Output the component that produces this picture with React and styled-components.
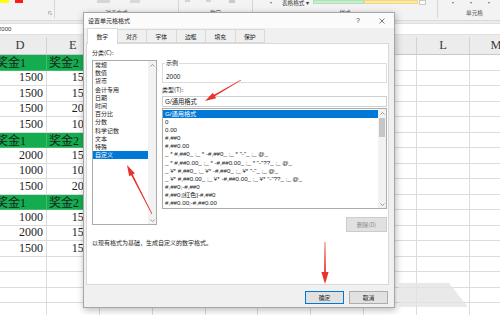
import React from 'react';
import styled, { createGlobalStyle } from 'styled-components';

const UI = `"Noto Sans CJK SC", "Liberation Sans", sans-serif`;
const LATIN_UI = `"Liberation Sans", "Noto Sans CJK SC", sans-serif`;
const CELL = `"Liberation Serif", "Noto Sans CJK SC", serif`;

const Global = createGlobalStyle`
  html, body { margin: 0; padding: 0; }
  body { background: #fff; font-family: ${UI}; }
  #root { width: 500px; height: 315px; overflow: hidden; }
`;

const Page = styled.div`
  position: relative;
  width: 500px;
  height: 315px;
  overflow: hidden;
  background: #fff;
`;

/* ---------- Ribbon ---------- */
const Ribbon = styled.div`
  display: flex;
  align-items: flex-start;
  height: 21px;
  box-sizing: border-box;
  background: #f3f3f3;
  border-bottom: 1px solid #d9d9d9;
  overflow: hidden;
`;
const Group = styled.div`
  flex: none;
  width: ${(p) => p.$w}px;
  height: 18px;
  box-sizing: border-box;
  border-right: 1px solid #d6d6d6;
  display: flex;
  flex-direction: column;
`;
const GroupTop = styled.div`
  height: 7px;
  display: flex;
  align-items: flex-start;
`;
const GroupLabel = styled.div`
  flex: 1;
  display: flex;
  align-items: center;
  justify-content: ${(p) => p.$justify || 'center'};
  padding-right: ${(p) => p.$pr || 0}px;
  font-family: ${UI};
  font-size: 5.6px;
  color: #505050;
`;
const Swatch = styled.div`
  flex: none;
  margin-left: ${(p) => p.$ml || 0}px;
  width: ${(p) => p.$w}px;
  height: ${(p) => p.$h || 3}px;
  background: ${(p) => p.$c};
  border: ${(p) => (p.$b ? `1px solid ${p.$b}` : 'none')};
  box-sizing: border-box;
`;
const RibbonText = styled.div`
  flex: none;
  margin-left: ${(p) => p.$ml || 0}px;
  font-family: ${UI};
  font-size: 5.6px;
  line-height: 6px;
  color: #333;
  white-space: nowrap;
`;
const Caret = styled.div`
  flex: none;
  margin-left: ${(p) => p.$ml || 0}px;
  margin-top: 2px;
  width: 0;
  height: 0;
  border-left: 1.5px solid transparent;
  border-right: 1.5px solid transparent;
  border-top: 2px solid #777;
`;

/* ---------- Formula bar ---------- */
const FormulaRow = styled.div`
  height: 16px;
  box-sizing: border-box;
  padding-top: 2px;
  background: #ececec;
`;
const FormulaInput = styled.div`
  height: 12px;
  box-sizing: border-box;
  background: #fff;
  border-top: 1px solid #e0e0e0;
  border-bottom: 1px solid #e0e0e0;
  font-family: ${LATIN_UI};
  font-size: 6px;
  line-height: 10px;
  color: #333;
  text-indent: -2px;
`;

/* ---------- Sheet ---------- */
const Sheet = styled.div`
  display: grid;
  grid-template-columns: repeat(10, 52.9px);
  grid-template-rows: 18px;
  grid-auto-rows: 15.5px;
  margin-left: -6px;
  width: 529px;
`;
const HeadCell = styled.div`
  box-sizing: border-box;
  background: #ececec;
  border-right: 1px solid #d2d2d2;
  border-bottom: 1px solid #c8c8c8;
  display: flex;
  align-items: center;
  justify-content: center;
  font-family: ${CELL};
  font-size: 12.5px;
  color: #3a3a3a;
`;
const Cell = styled.div`
  box-sizing: border-box;
  background: ${(p) => (p.$green ? '#13ad4f' : '#fff')};
  border-right: 1px solid ${(p) => (p.$green ? '#3fbc6c' : '#dcdcdc')};
  border-bottom: 1px solid ${(p) => (p.$green ? '#3fbc6c' : '#dcdcdc')};
  display: flex;
  align-items: center;
  justify-content: ${(p) => (p.$num ? 'flex-end' : 'flex-start')};
  padding: 0 3px 0 2px;
  overflow: hidden;
  white-space: nowrap;
  font-family: ${CELL};
  font-size: 12px;
  color: #1c1c1c;
`;

/* ---------- Dialog ---------- */
const Dialog = styled.div`
  position: absolute;
  left: 83px;
  top: 12px;
  width: 312px;
  height: 296px;
  box-sizing: border-box;
  background: #f0f0f0;
  border: 1px solid #a6a6a6;
  box-shadow: 1px 2px 7px rgba(0, 0, 0, 0.28);
  display: flex;
  flex-direction: column;
  font-family: ${UI};
  color: #1f1f1f;
`;
const TitleBar = styled.div`
  flex: none;
  height: 15px;
  display: flex;
  align-items: center;
  background: #fbfbfb;
`;
const Title = styled.div`
  flex: 1;
  padding-left: 4px;
  font-size: 6px;
  color: #222;
`;
const TitleBtn = styled.div`
  flex: none;
  width: 24px;
  height: 15px;
  display: flex;
  align-items: center;
  justify-content: center;
  font-family: ${LATIN_UI};
  font-size: 7px;
  color: #444;
`;
const Body = styled.div`
  flex: 1;
  display: flex;
  flex-direction: column;
  padding: 0 5px 0 2px;
  min-height: 0;
`;
const TabStrip = styled.div`
  flex: none;
  height: 15px;
  display: flex;
  align-items: flex-end;
  padding-left: 1px;
`;
const Tab = styled.div`
  flex: none;
  width: 30.5px;
  height: ${(p) => (p.$active ? 16 : 14)}px;
  margin-right: -1px;
  margin-bottom: ${(p) => (p.$active ? -1 : 0)}px;
  box-sizing: border-box;
  border: 1px solid #d9d9d9;
  border-bottom: ${(p) => (p.$active ? 'none' : '1px solid #d9d9d9')};
  background: ${(p) => (p.$active ? '#fff' : '#f0f0f0')};
  position: relative;
  z-index: ${(p) => (p.$active ? 1 : 0)};
  display: flex;
  align-items: center;
  justify-content: center;
  font-size: 5.8px;
  color: #222;
`;
const Panel = styled.div`
  flex: 1;
  background: #fff;
  border: 1px solid #d9d9d9;
  display: flex;
  flex-direction: column;
  padding: 0 1px 0 5px;
`;
const Columns = styled.div`
  display: flex;
  gap: 5px;
  align-items: flex-start;
`;
const Col = styled.div`
  flex: none;
  width: ${(p) => p.$w}px;
  display: flex;
  flex-direction: column;
`;
const Label = styled.div`
  margin-top: ${(p) => p.$mt || 0}px;
  height: 8px;
  line-height: 8px;
  font-size: 6px;
  color: #222;
  white-space: nowrap;
`;
const ListBox = styled.div`
  margin-top: ${(p) => p.$mt || 0}px;
  height: ${(p) => p.$h}px;
  box-sizing: border-box;
  border: 1px solid #ababab;
  display: flex;
  background: #fff;
`;
const ListItems = styled.div`
  flex: 1;
  min-width: 0;
  padding-top: ${(p) => p.$pt || 0}px;
  overflow: hidden;
`;
const ListItem = styled.div`
  height: ${(p) => p.$h}px;
  line-height: ${(p) => p.$h}px;
  padding-left: 2px;
  font-family: ${(p) => (p.$latin ? LATIN_UI : UI)};
  font-size: ${(p) => p.$fs}px;
  white-space: pre;
  background: ${(p) => (p.$sel ? '#0078d7' : 'transparent')};
  color: ${(p) => (p.$sel ? '#fff' : '#222')};
`;
const ScrollBar = styled.div`
  flex: none;
  width: 8px;
  background: #f2f2f2;
  display: flex;
  flex-direction: column;
  align-items: center;
`;
const ScrollArrow = styled.div`
  flex: none;
  height: 8px;
  width: 8px;
  display: flex;
  align-items: center;
  justify-content: center;
  margin-top: ${(p) => (p.$bottom ? 'auto' : '0')};
`;
const Thumb = styled.div`
  flex: none;
  margin-top: 1px;
  width: 6px;
  height: 19px;
  background: #c6c6c6;
`;
const GroupBox = styled.div`
  position: relative;
  margin-top: 19px;
  height: 20px;
  box-sizing: border-box;
  border: 1px solid #dcdcdc;
  padding: 9px 0 0 3px;
  font-family: ${LATIN_UI};
  font-size: 6.5px;
  line-height: 8px;
  color: #222;
`;
const Legend = styled.div`
  position: absolute;
  top: -5px;
  left: 2px;
  padding: 0 1px;
  background: #fff;
  font-size: 6px;
  line-height: 8px;
  color: #222;
`;
const TextBox = styled.div`
  margin-top: 2px;
  height: 11px;
  box-sizing: border-box;
  border: 1px solid #cfcfcf;
  padding-left: 2px;
  font-family: ${LATIN_UI};
  font-size: 6.3px;
  line-height: 9px;
  color: #222;
`;
const Button = styled.div`
  flex: none;
  align-self: ${(p) => p.$align || 'auto'};
  margin-top: ${(p) => p.$mt || 0}px;
  width: ${(p) => p.$w}px;
  height: ${(p) => p.$h}px;
  box-sizing: border-box;
  background: #e1e1e1;
  border: 1px solid ${(p) => p.$border || '#adadad'};
  display: flex;
  align-items: center;
  justify-content: center;
  font-size: 5.8px;
  color: ${(p) => p.$color || '#222'};
`;
const Description = styled.div`
  margin-top: 7px;
  height: 8px;
  line-height: 8px;
  font-size: 6px;
  color: #222;
`;
const Footer = styled.div`
  flex: none;
  height: 22px;
  display: flex;
  justify-content: flex-end;
  align-items: flex-start;
  gap: 5px;
  padding: 6px 6px 0 0;
  box-sizing: border-box;
`;
const Overlay = styled.svg`
  position: absolute;
  left: 0;
  top: 0;
  pointer-events: none;
`;

const Chevron = ({ up }) => (
  <svg width="5" height="3" viewBox="0 0 5 3">
    <polyline
      points={up ? '0.5,2.5 2.5,0.5 4.5,2.5' : '0.5,0.5 2.5,2.5 4.5,0.5'}
      fill="none"
      stroke="#777"
      strokeWidth="0.7"
    />
  </svg>
);

const Close = () => (
  <svg width="6" height="6" viewBox="0 0 6 6">
    <path d="M0.5 0.5 L5.5 5.5 M5.5 0.5 L0.5 5.5" stroke="#444" strokeWidth="0.7" />
  </svg>
);

const Launcher = () => (
  <svg width="4" height="4" viewBox="0 0 4 4">
    <path d="M0.5 3.5 V0.5 H3.5" fill="none" stroke="#888" strokeWidth="0.5" />
    <path d="M1.3 1.3 L3.5 3.5 M2.3 3.5 H3.5 V2.3" fill="none" stroke="#888" strokeWidth="0.5" />
  </svg>
);

function arrowPoints(x1, y1, x2, y2, headLen = 11, headW = 3.2, shaftW = 0.9) {
  const dx = x2 - x1;
  const dy = y2 - y1;
  const L = Math.hypot(dx, dy);
  const ux = dx / L;
  const uy = dy / L;
  const px = -uy;
  const py = ux;
  const bx = x2 - ux * headLen;
  const by = y2 - uy * headLen;
  const pts = [
    [x1 + px * 0.35, y1 + py * 0.35],
    [bx + px * shaftW, by + py * shaftW],
    [bx + px * headW, by + py * headW],
    [x2, y2],
    [bx - px * headW, by - py * headW],
    [bx - px * shaftW, by - py * shaftW],
    [x1 - px * 0.35, y1 - py * 0.35],
  ];
  return pts.map((p) => p.map((v) => v.toFixed(2)).join(',')).join(' ');
}

const COLS = ['D', 'E', 'F', 'G', 'H', 'I', 'J', 'K', 'L', 'M'];
const ROWS = [
  { g: true, d: '奖金1', e: '奖金2' },
  { d: '1500', e: '1500' },
  { d: '1500', e: '1500' },
  { d: '1500', e: '2000' },
  { d: '1500', e: '1000' },
  { g: true, d: '奖金1', e: '奖金2' },
  { d: '2000', e: '1500' },
  { d: '1000', e: '1000' },
  { d: '1500', e: '2000' },
  { g: true, d: '奖金1', e: '奖金2' },
  { d: '1000', e: '1500' },
  { d: '2000', e: '1500' },
  { d: '1500', e: '1500' },
  {}, {}, {}, {},
];

const CATEGORIES = ['常规', '数值', '货币', '会计专用', '日期', '时间', '百分比', '分数', '科学记数', '文本', '特殊', '自定义'];
const FORMATS = [
  'G/通用格式',
  '0',
  '0.00',
  '#,##0',
  '#,##0.00',
  '_ * #,##0_ ;_ * -#,##0_ ;_ * "-"_ ;_ @_ ',
  '_ * #,##0.00_ ;_ * -#,##0.00_ ;_ * "-"??_ ;_ @_ ',
  '_ ¥* #,##0_ ;_ ¥* -#,##0_ ;_ ¥* "-"_ ;_ @_ ',
  '_ ¥* #,##0.00_ ;_ ¥* -#,##0.00_ ;_ ¥* "-"??_ ;_ @_ ',
  '#,##0;-#,##0',
  '#,##0;[红色]-#,##0',
  '#,##0.00;-#,##0.00',
];
const TABS = ['数字', '对齐', '字体', '边框', '填充', '保护'];

export default function App() {
  return (
    <Page>
      <Global />
      <Ribbon>
        <Group $w={55}>
          <GroupTop>
            <Swatch $w={9} $c="#ffff00" />
            <Swatch $ml={6} $w={8} $c="#ff1a1a" />
          </GroupTop>
          <GroupLabel $justify="flex-end" $pr={2}>
            <Launcher />
          </GroupLabel>
        </Group>
        <Group $w={124}>
          <GroupTop>
            <Swatch $ml={42} $w={13} $h={3} $c="#d6d6d6" />
            <Swatch $ml={20} $w={10} $h={3} $c="#d9d9d9" />
          </GroupTop>
          <GroupLabel>对齐方式</GroupLabel>
        </Group>
        <Group $w={74}>
          <GroupTop>
            <Swatch $ml={6} $w={5} $h={2} $c="#d4d4d4" />
            <Swatch $ml={16} $w={5} $h={2} $c="#d4d4d4" />
            <Swatch $ml={18} $w={6} $h={3} $c="#c9c9c9" />
          </GroupTop>
          <GroupLabel>数字</GroupLabel>
        </Group>
        <Group $w={185}>
          <GroupTop>
            <Caret $ml={17} />
            <RibbonText $ml={10}>表格格式 ▾</RibbonText>
            <Swatch $ml={4} $w={51} $h={4} $c="#c6efce" $b="#b4dfbc" />
            <Swatch $w={54} $h={4} $c="#ffeb9c" $b="#ecd88c" />
            <Swatch $ml={1} $w={7} $h={5} $c="#fafafa" $b="#c9c9c9" />
          </GroupTop>
          <GroupLabel>样式</GroupLabel>
        </Group>
        <Group $w={74}>
          <GroupTop>
            <Caret $ml={14} />
            <Caret $ml={16} />
            <Caret $ml={16} />
          </GroupTop>
          <GroupLabel>单元格</GroupLabel>
        </Group>
      </Ribbon>

      <FormulaRow>
        <FormulaInput>2000</FormulaInput>
      </FormulaRow>

      <Sheet>
        {COLS.map((c) => (
          <HeadCell key={c}>{c}</HeadCell>
        ))}
        {ROWS.map((r, ri) =>
          COLS.map((c, ci) => {
            const v = ci === 0 ? r.d : ci === 1 ? r.e : '';
            const green = r.g && ci < 3;
            return (
              <Cell key={`${ri}-${c}`} $green={green} $num={!r.g && !!v}>
                {v}
              </Cell>
            );
          })
        )}
      </Sheet>

      <Dialog>
        <TitleBar>
          <Title>设置单元格格式</Title>
          <TitleBtn>?</TitleBtn>
          <TitleBtn>
            <Close />
          </TitleBtn>
        </TitleBar>
        <Body>
          <TabStrip>
            {TABS.map((t, i) => (
              <Tab key={t} $active={i === 0}>
                {t}
              </Tab>
            ))}
          </TabStrip>
          <Panel>
            <Columns>
              <Col $w={65}>
                <Label $mt={5}>分类(C):</Label>
                <ListBox $mt={3} $h={165}>
                  <ListItems $pt={0}>
                    {CATEGORIES.map((c) => (
                      <ListItem key={c} $h={8.2} $fs={6} $sel={c === '自定义'}>
                        {c}
                      </ListItem>
                    ))}
                  </ListItems>
                  <ScrollBar>
                    <ScrollArrow>
                      <Chevron up />
                    </ScrollArrow>
                    <ScrollArrow $bottom>
                      <Chevron />
                    </ScrollArrow>
                  </ScrollBar>
                </ListBox>
              </Col>
              <Col $w={225}>
                <GroupBox>
                  <Legend>示例</Legend>
                  2000
                </GroupBox>
                <Label $mt={3}>类型(T):</Label>
                <TextBox>G/通用格式</TextBox>
                <ListBox $mt={1} $h={101}>
                  <ListItems $pt={1}>
                    {FORMATS.map((f, i) => (
                      <ListItem key={f} $h={8.1} $fs={6.2} $latin $sel={i === 0}>
                        {f}
                      </ListItem>
                    ))}
                  </ListItems>
                  <ScrollBar>
                    <ScrollArrow>
                      <Chevron up />
                    </ScrollArrow>
                    <Thumb />
                    <ScrollArrow $bottom>
                      <Chevron />
                    </ScrollArrow>
                  </ScrollBar>
                </ListBox>
                <Button $align="flex-end" $mt={8} $w={41} $h={15} $border="#cccccc" $color="#8c8c8c">
                  删除(D)
                </Button>
              </Col>
            </Columns>
            <Description>以现有格式为基础，生成自定义的数字格式。</Description>
          </Panel>
        </Body>
        <Footer>
          <Button $w={39} $h={13} $border="#0078d7">
            确定
          </Button>
          <Button $w={39} $h={13}>
            取消
          </Button>
        </Footer>
      </Dialog>

      <Overlay width="500" height="315" viewBox="0 0 500 315">
        <polygon points="399,283 449,283 468,307 399,307" fill="#e4e4e4" opacity="0.8" />
        <polygon points={arrowPoints(241, 80, 205, 101)} fill="#e8342e" />
        <polygon points={arrowPoints(152, 214, 127, 165)} fill="#e8342e" />
        <polygon points={arrowPoints(325, 242, 325, 284, 12, 3.6)} fill="#e8342e" />
      </Overlay>
    </Page>
  );
}
